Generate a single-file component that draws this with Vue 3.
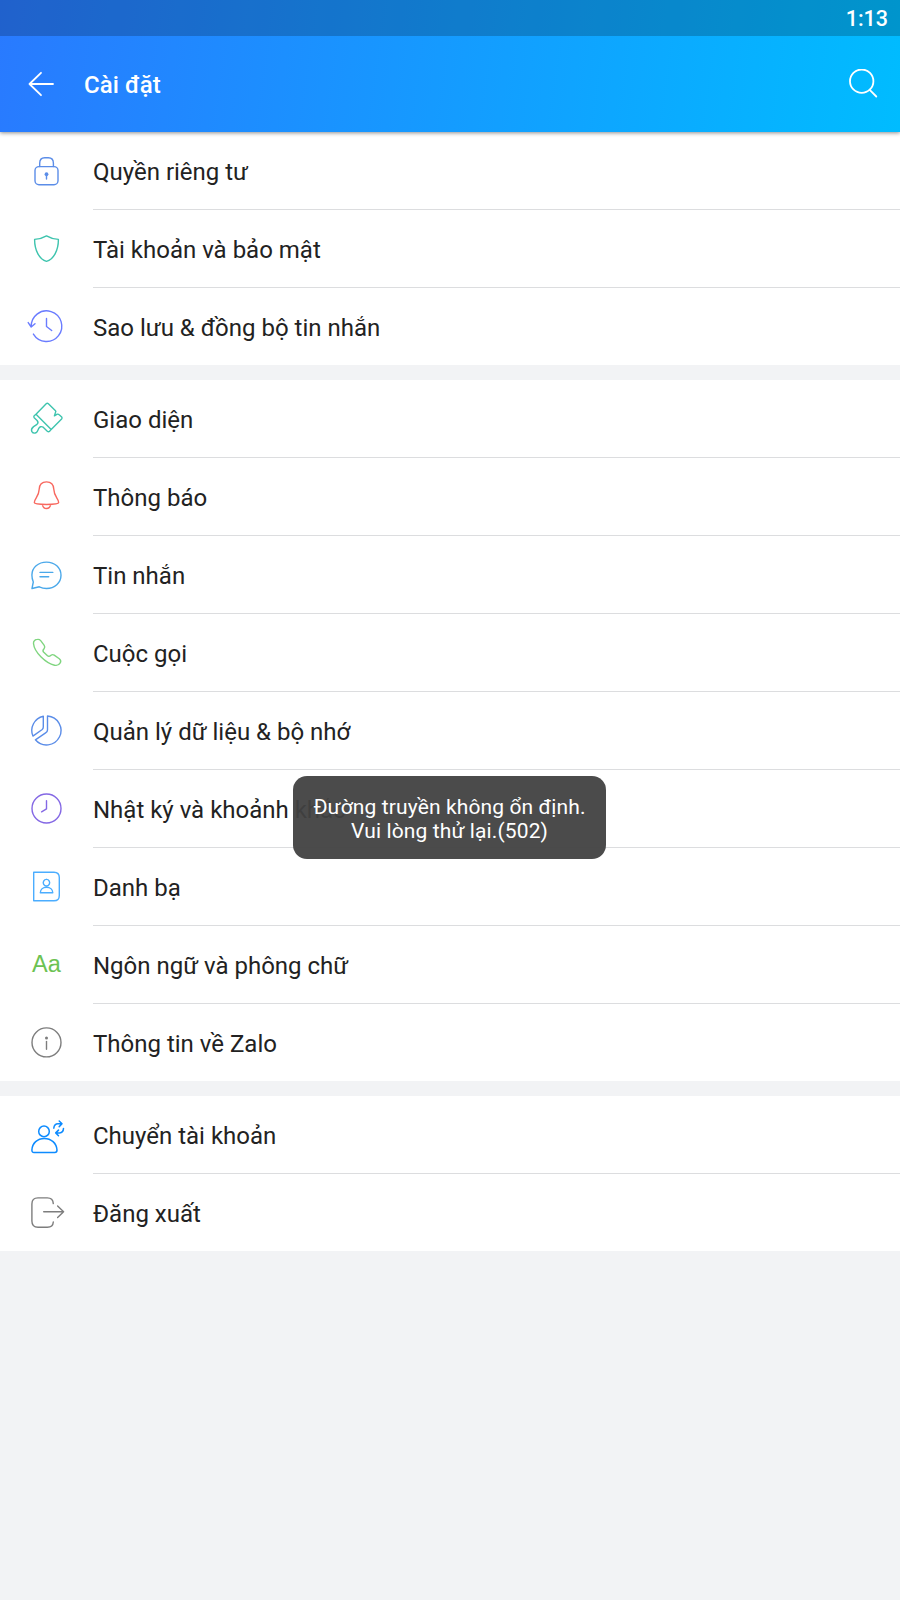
<script setup>
const groups = [
  [
    { icon: 'lock', label: 'Quyền riêng tư', color: '#5b8de8' },
    { icon: 'shield', label: 'Tài khoản và bảo mật', color: '#3ec4ae' },
    { icon: 'backup', label: 'Sao lưu & đồng bộ tin nhắn', color: '#6a7cff' }
  ],
  [
    { icon: 'brush', label: 'Giao diện', color: '#3ec4ae' },
    { icon: 'bell', label: 'Thông báo', color: '#f8685f' },
    { icon: 'chat', label: 'Tin nhắn', color: '#4aa8ea' },
    { icon: 'phone', label: 'Cuộc gọi', color: '#7fd57f' },
    { icon: 'pie', label: 'Quản lý dữ liệu & bộ nhớ', color: '#5b8de8' },
    { icon: 'clock', label: 'Nhật ký và khoảnh khắc', color: '#8468e4' },
    { icon: 'contacts', label: 'Danh bạ', color: '#4badff' },
    { icon: 'font', label: 'Ngôn ngữ và phông chữ', color: '#6cc253' },
    { icon: 'info', label: 'Thông tin về Zalo', color: '#7d7d7d' }
  ],
  [
    { icon: 'switch', label: 'Chuyển tài khoản', color: '#0d8bff' },
    { icon: 'logout', label: 'Đăng xuất', color: '#7d7d7d' }
  ]
]
</script>

<template>
  <div class="screen">
    <header class="top">
      <div class="status">1:13</div>
      <div class="bar">
        <svg class="back" width="26" height="26" viewBox="0 0 26 26">
          <path d="M25 13H1.5M13 1.8L1.5 13L13 24.2" />
        </svg>
        <h1>Cài đặt</h1>
        <svg class="search" width="30" height="30" viewBox="0 0 30 30">
          <circle cx="13.7" cy="12.2" r="11.7" />
          <path d="M21.7 20.8l6.6 6.7" />
        </svg>
      </div>
    </header>

    <main>
      <section v-for="(group, g) in groups" :key="g" class="group">
        <div v-for="item in group" :key="item.icon" class="row">
          <svg class="icon" width="93" height="77" viewBox="0 0 93 77" :style="{ color: item.color }">
            <g v-if="item.icon === 'lock'">
              <rect x="35" y="34.6" width="23" height="18.2" rx="4" />
              <path d="M39.7 34.6v-3.4c0-3.6 1.8-5.4 5-5.4h3.7c3.2 0 5 1.8 5 5.4v3.4M46.5 43v4" />
              <circle class="solid" cx="46.5" cy="42.2" r="1.9" />
            </g>
            <path v-else-if="item.icon === 'shield'" d="M46.5 25.9C43 28 38.5 29.2 34.6 29.4C34.6 40.5 39.5 49.5 46.5 51.4C53.5 49.5 58.4 40.5 58.4 29.4C54.5 29.2 50 28 46.5 25.9Z" />
            <path v-else-if="item.icon === 'backup'" d="M31.2 39A15.3 15.3 0 1 1 33.4 46.1M28.2 34.6L31.2 39L35 35.8M46.5 30.4v8.1l5.2 4" />
            <path v-else-if="item.icon === 'brush'" d="M36 34.2L46.2 23.8Q47.3 22.8 48.4 23.8L55.5 30.8Q56.2 31.5 55.5 32.4L54.4 35.9L57.3 34.2Q58.3 33.9 59.2 34.8L61.7 37Q62.5 38 61.6 39L51.2 49.4ZM36 34.2L34.2 35.8Q33.4 36.8 34.2 37.8L37.1 40.5Q38.9 42.7 37 44.3L33.6 46.6Q30.8 48.7 31.7 51.3Q33.3 54 36.2 52.7Q37.5 51.5 38.6 48.7Q40.3 45.6 43.2 47.2L47.3 51.2Q48.5 52.2 49.6 51.2L51.2 49.4" />
            <path v-else-if="item.icon === 'bell'" d="M46.5 23.9C42 23.9 39.4 27 39.2 31.2C39 38.5 34.4 40.7 34.3 44.4C34.4 46 38.5 46.5 46.5 46.5S58.6 46 58.7 44.4C58.6 40.7 54 38.5 53.8 31.2C53.6 27 51 23.9 46.5 23.9ZM42.4 46.8C43 49.4 44.5 50.5 46.5 50.5S50 49.4 50.7 46.8" />
            <path v-else-if="item.icon === 'chat'" d="M32 52.5L33.3 46C32.3 43.7 31.9 41.5 31.9 39C31.9 31.5 38.3 26.1 46.5 26.1S61 31.7 61 39.3S54.6 52.5 46.5 52.5C43.6 52.5 41.4 51.8 39.3 50.8ZM40 36.4h12.8M40 40.7h8.7" />
            <path v-else-if="item.icon === 'phone'" d="M33.5 29.5C33.3 27.2 35.3 25.4 37.4 25.4C38.7 25.2 39.8 25.6 40.7 26.6L44.2 31.3C45 32.5 45 33.3 44.2 34.4C42.8 35.8 42.5 36.8 43.5 38L47.5 41.8C48.8 42.8 49.8 42.3 51 41.2C52.2 40.3 53.2 40.5 54.2 41.1L59.3 44.7C60.8 46 61.1 47.5 60.2 48.8C58.9 51 56.8 51.8 54.5 51.2C46 49.3 34.3 38.5 33.5 29.5Z" />
            <path v-else-if="item.icon === 'pie'" d="M47.5 24A14.5 14.5 0 1 1 35.4 47.8L45.6 40.9Q47.5 39.7 47.5 37.9ZM43.3 24.3A14.6 14.6 0 0 0 32.9 44.1L42.2 37.5Q43.3 36.6 43.3 35.1Z" />
            <g v-else-if="item.icon === 'clock'">
              <circle cx="46.5" cy="38.5" r="14.5" />
              <path d="M46.5 30.7v8.2l-4.9 2.9" />
            </g>
            <path v-else-if="item.icon === 'contacts'" d="M33.7 24.3H54Q59.3 24.3 59.3 29.6V47.5Q59.3 52.8 54 52.8H33.7ZM46.5 31.4A3.2 3.3 0 1 1 46.4 31.4M40.3 44.8C40.3 41.4 43 39.2 46.5 39.2S52.8 41.4 52.8 44.8Z" />
            <text v-else-if="item.icon === 'font'" x="32" y="45.7">Aa</text>
            <g v-else-if="item.icon === 'info'">
              <circle cx="46.5" cy="38.4" r="14.5" />
              <path d="M46.5 37.4v7.8" />
              <circle class="solid" cx="46.5" cy="33.9" r="1.5" />
            </g>
            <g v-else-if="item.icon === 'switch'" class="bold">
              <circle cx="44" cy="35.4" r="5.3" />
              <path d="M34 56.5Q31.8 56.5 31.9 54C32.2 47 37.5 42.4 44.3 42.4S56.6 47 57 54Q57 56.5 54.8 56.5ZM53.8 32.2Q54.3 27.8 58 27.8H61.6M59.2 25L62 27.8L59.2 30.6M63.5 32.4Q63.3 36.7 59.6 36.9H56M58.5 34.1L55.7 36.9L58.5 39.7" />
            </g>
            <path v-else d="M53.3 29.6Q53 23.9 47.3 23.9H38Q31.9 23.9 31.9 30V47Q31.9 53.2 38 53.2H47.3Q53 53.2 53.3 48M43.7 37.7H63.6M57.6 32L63.6 37.7L57.6 43.4" />
          </svg>
          <span class="label">{{ item.label }}</span>
        </div>
      </section>
    </main>

    <div class="toast">Đường truyền không ổn định.<br />Vui lòng thử lại.(502)</div>
  </div>
</template>

<style>
body {
  background: #f2f3f5;
}
</style>

<style scoped>
.screen {
  position: relative;
  height: 1600px;
  overflow: hidden;
  background: #f2f3f5;
  color: #222;
  font-family: Roboto, "Noto Sans", sans-serif;
}
.top {
  position: relative;
  background: linear-gradient(98deg, #297aff 0%, #00bcff 100%);
  box-shadow: 0 1px 4px rgba(0, 0, 0, 0.45);
  color: #fff;
}
.status {
  height: 36px;
  box-sizing: border-box;
  padding-right: 12px;
  background: rgba(0, 0, 0, 0.2);
  font-size: 21.5px;
  font-weight: 500;
  line-height: 38px;
  text-align: right;
}
.bar {
  display: flex;
  align-items: center;
  height: 96px;
  padding: 0 22px 0 28px;
}
h1 {
  flex: 1;
  margin: 2px 0 0 30px;
  font-size: 24px;
  font-weight: 500;
  line-height: 28px;
  letter-spacing: 0.05px;
}
.back,
.search {
  fill: none;
  stroke: #fff;
  stroke-width: 1.8;
  stroke-linecap: round;
  stroke-linejoin: round;
}
.group {
  margin-bottom: 15px;
  background: #fff;
}
.row {
  display: flex;
  height: 78px;
}
.row:last-child {
  height: 77px;
}
.icon {
  flex: none;
  fill: none;
  stroke: currentColor;
  stroke-width: 1.4;
  stroke-linecap: round;
  stroke-linejoin: round;
}
.icon .solid {
  fill: currentColor;
  stroke: none;
}
.icon .bold {
  stroke-width: 1.5;
}
.icon text {
  fill: currentColor;
  stroke: none;
  font: 23.5px "Liberation Sans", sans-serif;
}
.label {
  flex: 1;
  box-sizing: border-box;
  border-bottom: 1px solid #dcdddf;
  font-size: 24px;
  line-height: 81px;
  white-space: nowrap;
}
.row:last-child .label {
  border-bottom: none;
}
.toast {
  position: absolute;
  top: 776px;
  left: 293px;
  width: 313px;
  height: 83px;
  box-sizing: border-box;
  padding-top: 19px;
  border-radius: 14px;
  background: rgba(65, 65, 65, 0.95);
  color: #fff;
  font-size: 21px;
  letter-spacing: 0.12px;
  line-height: 24px;
  text-align: center;
  white-space: nowrap;
}
</style>
